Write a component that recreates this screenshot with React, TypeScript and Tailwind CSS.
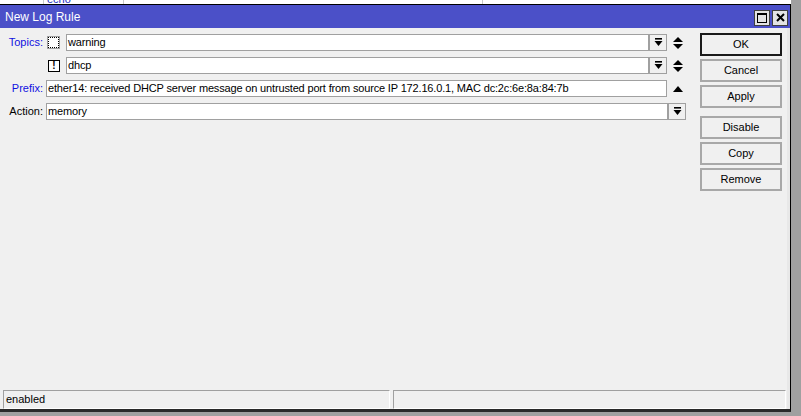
import React from "react";

const font = { fontFamily: '"Liberation Sans", Arial, sans-serif' };

function DropBtn() {
  return (
    <div className="w-[18px] h-[17px] bg-[#f0f0f0] border border-[#a0a0a0] flex items-center justify-center shrink-0">
      <svg width="9" height="9" viewBox="0 0 9 9">
        <rect x="1" y="0" width="7" height="1.6" fill="#000" />
        <polygon points="0.5,3 8.5,3 4.5,8" fill="#000" />
      </svg>
    </div>
  );
}

function UpDown() {
  return (
    <svg width="10" height="12" viewBox="0 0 10 12">
      <polygon points="5,0 10,5 0,5" fill="#000" />
      <polygon points="0,7 10,7 5,12" fill="#000" />
    </svg>
  );
}

function Up() {
  return (
    <svg width="10" height="6" viewBox="0 0 10 6">
      <polygon points="5,0 10,6 0,6" fill="#000" />
    </svg>
  );
}

function Input({ w, value }: { w: string; value: string }) {
  return (
    <div
      className={`${w} h-[17px] bg-white border border-[#a0a0a0] flex items-center pl-[1px] text-[11px] tracking-[-0.16px] text-black whitespace-nowrap overflow-hidden shrink-0`}
    >
      {value}
    </div>
  );
}

function Btn({ label, def }: { label: string; def?: boolean }) {
  return (
    <div
      className={`w-[82px] h-[23px] flex items-center justify-center text-[11px] text-black bg-[#f0f0f0] ${
        def ? "border-2 border-[#1a1a1a]" : "border-2 border-[#a8a8a8]"
      }`}
    >
      {label}
    </div>
  );
}

export default function App() {
  return (
    <div style={font} className="w-[801px] h-[416px] bg-[#a0a0a0] overflow-hidden flex flex-col">
      {/* background window strip */}
      <div className="h-[4px] w-[791px] bg-white flex overflow-hidden shrink-0">
        <div className="w-[44px] border-r border-[#c8c8c8]" />
        <div className="w-[80px] border-r border-[#c8c8c8] relative">
          <span className="absolute left-[3px] top-[-9px] text-[11px] text-[#2030c0]">echo</span>
        </div>
        <div className="w-[359px] border-r border-[#c8c8c8]" />
      </div>
      {/* window */}
      <div className="w-[791px] h-[408px] flex flex-col border-t border-black border-r border-r-black border-b-[3px] border-b-[#2a2a2a] bg-[#f0f0f0] shrink-0">
        {/* title bar */}
        <div className="h-[23px] bg-[#4b50c8] flex items-center pl-[5px] pr-[2px] shrink-0">
          <span className="text-white text-[12px] flex-1">New Log Rule</span>
          <div className="flex gap-[2px] mt-[2px]">
            <div className="w-[16px] h-[16px] bg-[#e4e4e4] border border-[#404040] flex items-center justify-center">
              <div className="w-[10px] h-[10px] border border-black border-t-2" />
            </div>
            <div className="w-[16px] h-[16px] bg-[#e4e4e4] border border-[#404040] flex items-center justify-center">
              <svg width="9" height="9" viewBox="0 0 9 9">
                <path d="M1 1 L8 8 M8 1 L1 8" stroke="#000" strokeWidth="2" />
              </svg>
            </div>
          </div>
        </div>
        {/* content */}
        <div className="flex-1 flex flex-col border-r-[3px] border-r-[#e8e8e8]">
          <div className="flex pt-[5px]">
            {/* form */}
            <div className="w-[700px] flex flex-col gap-[6px] pt-[1px]">
              <div className="flex items-center h-[17px]">
                <div className="w-[43px] text-right text-[11px] text-[#1010e0]">Topics:</div>
                <div className="w-[23px] pl-[5px] flex items-center">
                  <div className="w-[11px] h-[11px] bg-white border border-dotted border-black outline outline-1 outline-[#a0a0a0]" />
                </div>
                <Input w="w-[583px]" value="warning" />
                <DropBtn />
                <div className="w-[20px] flex justify-center ml-[1px]">
                  <UpDown />
                </div>
              </div>
              <div className="flex items-center h-[17px]">
                <div className="w-[43px]" />
                <div className="w-[23px] pl-[5px] flex items-center">
                  <div className="w-[12px] h-[12px] bg-white border border-black flex items-center justify-center text-[10px] font-bold leading-none">
                    !
                  </div>
                </div>
                <Input w="w-[583px]" value="dhcp" />
                <DropBtn />
                <div className="w-[20px] flex justify-center ml-[1px]">
                  <UpDown />
                </div>
              </div>
              <div className="flex items-center h-[17px]">
                <div className="w-[43px] text-right text-[11px] text-[#1010e0]">Prefix:</div>
                <div className="w-[3px]" />
                <Input
                  w="w-[621px]"
                  value="ether14: received DHCP server message on untrusted port from source IP 172.16.0.1, MAC dc:2c:6e:8a:84:7b"
                />
                <div className="w-[20px] flex justify-center ml-[1px]">
                  <Up />
                </div>
              </div>
              <div className="flex items-center h-[17px]">
                <div className="w-[43px] text-right text-[11px] text-black">Action:</div>
                <div className="w-[3px]" />
                <Input w="w-[622px]" value="memory" />
                <DropBtn />
              </div>
            </div>
            {/* buttons */}
            <div className="flex flex-col">
              <div className="flex flex-col gap-[3px]">
                <Btn label="OK" def />
                <Btn label="Cancel" />
                <Btn label="Apply" />
              </div>
              <div className="flex flex-col gap-[3px] mt-[8px]">
                <Btn label="Disable" />
                <Btn label="Copy" />
                <Btn label="Remove" />
              </div>
            </div>
          </div>
          <div className="flex-1" />
          {/* status bar */}
          <div className="flex gap-[3px] pl-[3px] pr-[1px]">
            <div className="w-[387px] h-[19px] border-t border-l border-[#a0a0a0] border-b border-r border-b-white border-r-white flex items-center pl-[2px] text-[11px] text-black">
              enabled
            </div>
            <div className="flex-1 h-[19px] border-t border-l border-[#a0a0a0] border-b border-r border-b-white border-r-white" />
          </div>
        </div>
      </div>
    </div>
  );
}
